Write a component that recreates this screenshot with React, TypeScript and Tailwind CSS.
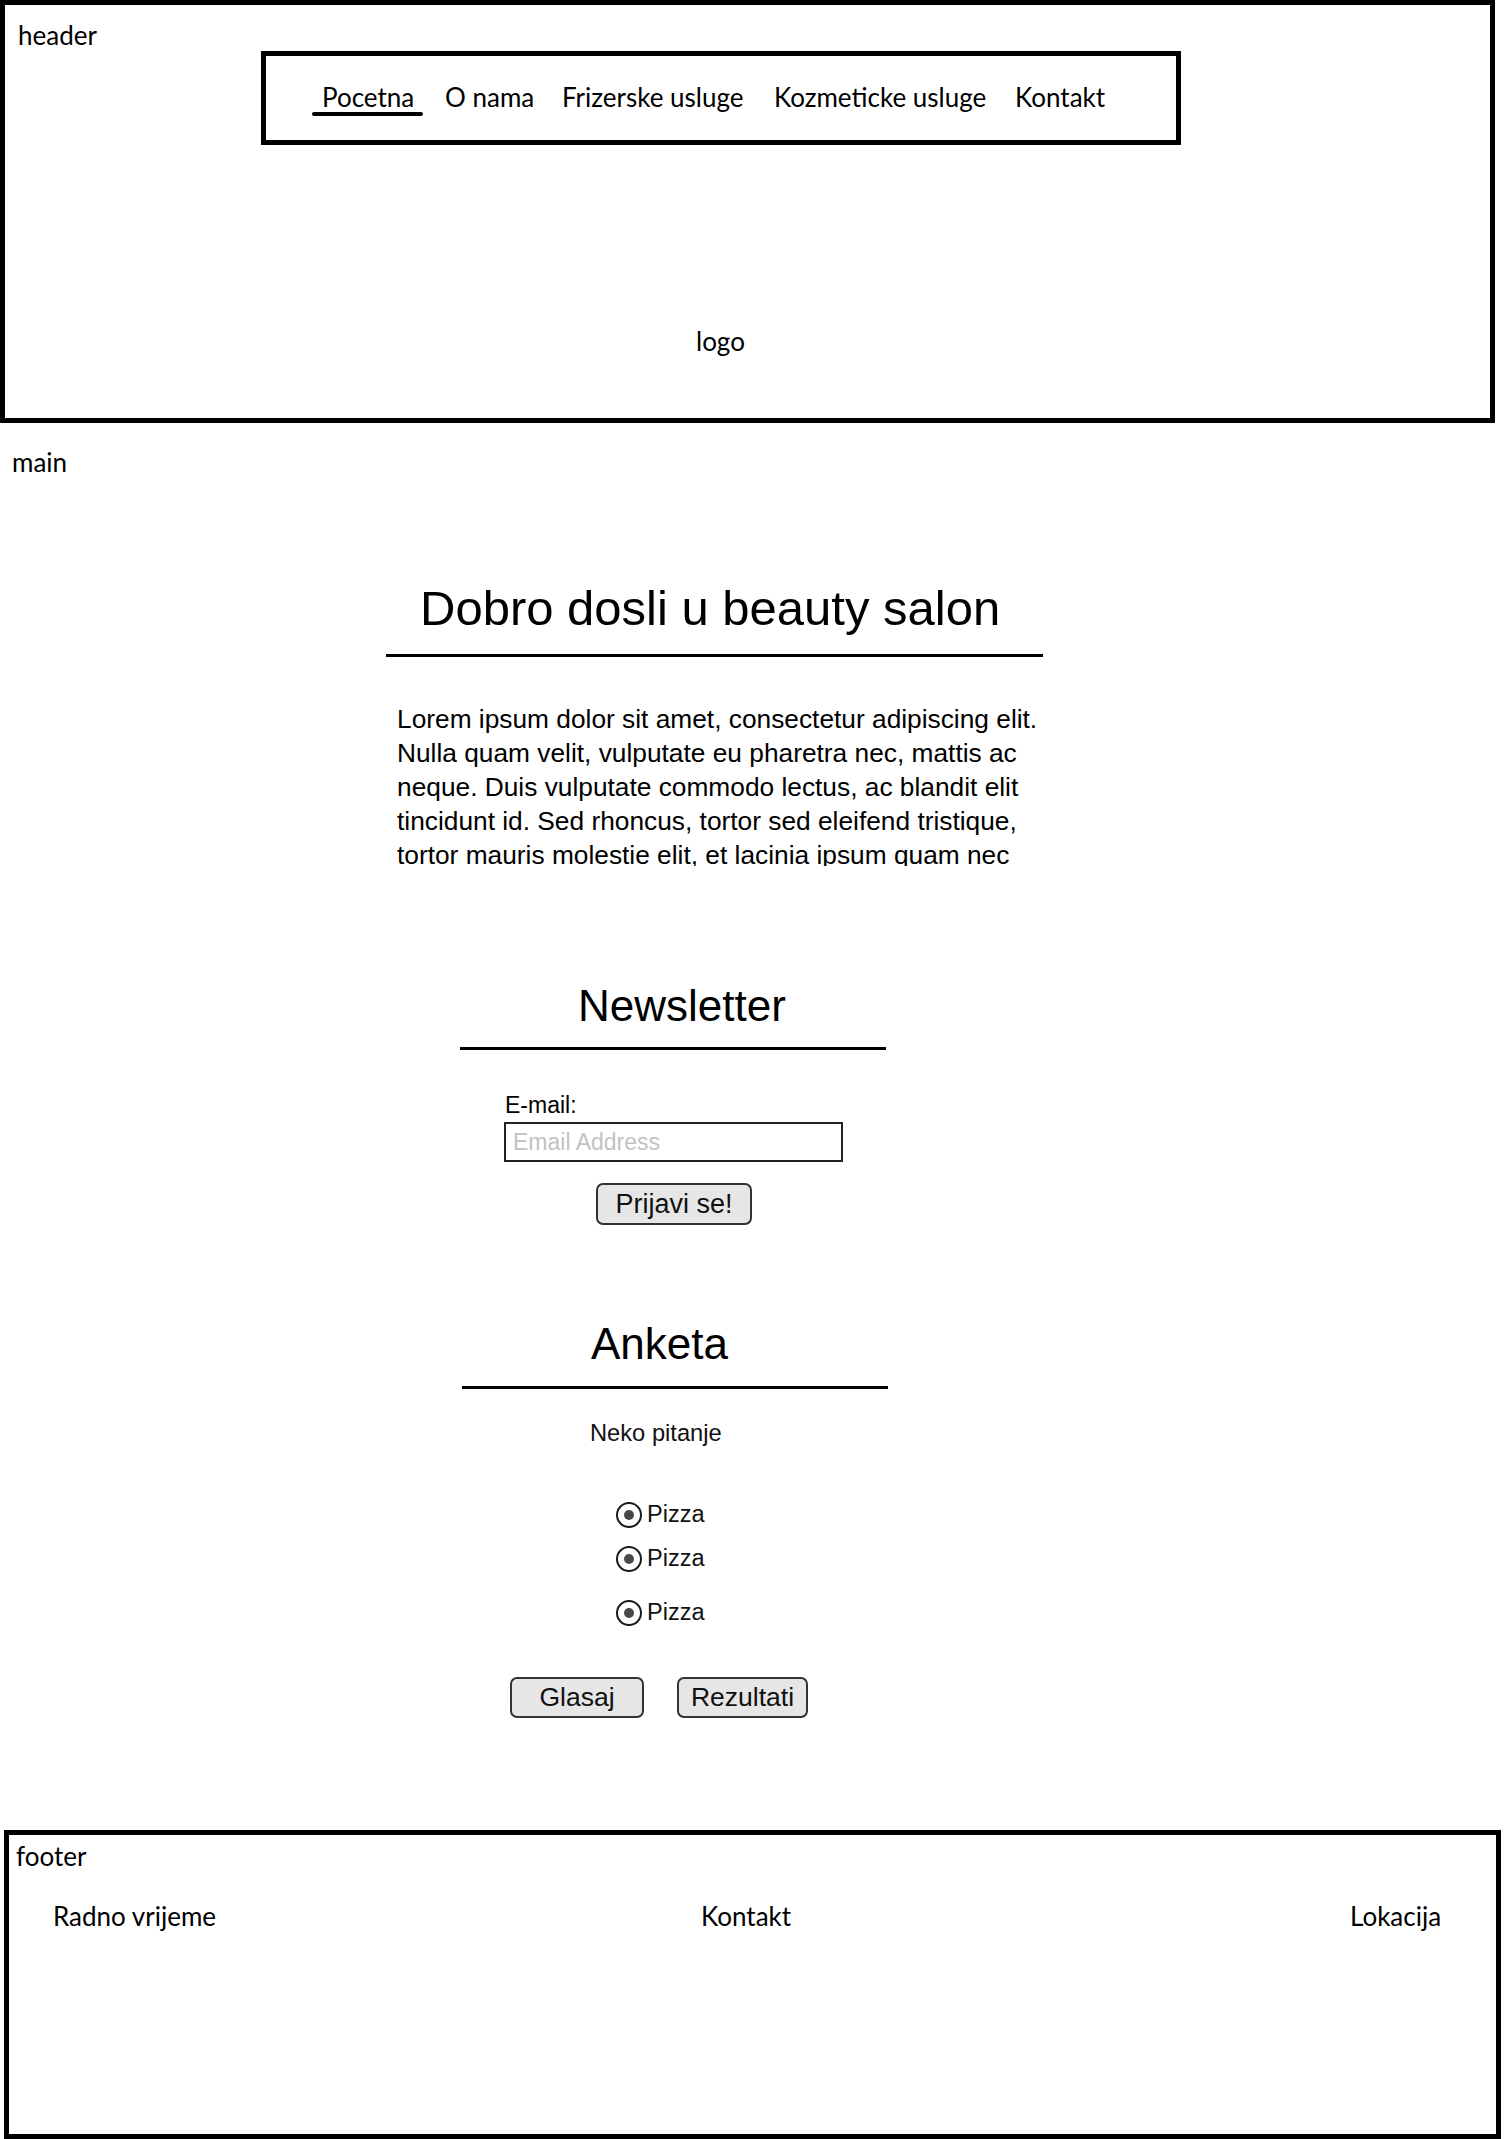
import React from "react";

const cal = "font-['Lato','Carlito',sans-serif]";
const ari = "font-['Liberation_Sans',Arial,sans-serif]";

function Radio({ label, className }: { label: string; className?: string }) {
  return (
    <div className={`flex items-center h-[26px] ml-[616px] ${className ?? ""}`}>
      <span className="w-[26px] h-[26px] rounded-full border-2 border-[#1a1a1a] flex items-center justify-center">
        <span className="w-[10px] h-[10px] rounded-full bg-[#484848]" />
      </span>
      <span className={`${ari} text-[23.5px] leading-none ml-[5px] text-[#111]`}>{label}</span>
    </div>
  );
}

export default function App() {
  return (
    <div className="w-[1512px] h-[2139px] bg-white text-black overflow-hidden">
      {/* HEADER */}
      <header className="w-[1495px] h-[423px] border-[5px] border-black flex flex-col">
        <div className={`${cal} text-[26px] leading-[28px] h-[28px] mt-[16px] ml-[13px]`}>header</div>
        <nav className="w-[920px] h-[94px] border-[5px] border-black ml-[256px] mt-[2px] flex items-start pt-[27px] pl-[56px]">
          <div className="w-[123px] flex flex-col">
            <span className={`${cal} text-[26px] leading-[28px] h-[28px]`}>Pocetna</span>
            <span className="block h-[4px] w-[111px] -ml-[10px] mt-[1px] rounded-full bg-black" />
          </div>
          <span className={`${cal} text-[26px] leading-[28px] w-[117px]`}>O nama</span>
          <span className={`${cal} text-[26px] leading-[28px] w-[212px]`}>Frizerske usluge</span>
          <span className={`${cal} text-[26px] leading-[28px] w-[241px]`}>Kozmeticke usluge</span>
          <span className={`${cal} text-[26px] leading-[28px]`}>Kontakt</span>
        </nav>
        <div className={`${cal} text-[26px] leading-[28px] h-[28px] mt-[182px] ml-[691px]`}>logo</div>
      </header>

      {/* MAIN */}
      <main className="flex flex-col">
        <div className={`${cal} text-[26px] leading-[28px] h-[28px] mt-[25px] ml-[12px]`}>main</div>

        <section className="ml-[386px] w-[657px] flex flex-col mt-[108px]">
          <h1 className={`${ari} text-[49px] leading-none h-[49px] pl-[34px] whitespace-nowrap`}>
            Dobro dosli u beauty salon
          </h1>
          <div className="h-[3px] bg-black mt-[21px]" />
          <p className={`${ari} text-[26.3px] leading-[34px] w-[655px] h-[164px] overflow-hidden ml-[11px] mt-[45px]`}>
            Lorem ipsum dolor sit amet, consectetur adipiscing elit. Nulla quam velit, vulputate eu pharetra nec,
            mattis ac neque. Duis vulputate commodo lectus, ac blandit elit tincidunt id. Sed rhoncus, tortor sed
            eleifend tristique, tortor mauris molestie elit, et lacinia ipsum quam nec dui. Quisque nec mauris sit
            amet elit iaculis pretium sit amet quis magna.
          </p>
        </section>

        {/* Newsletter */}
        <section className="flex flex-col mt-[118px]">
          <h2 className={`${ari} text-[44px] leading-none h-[44px] ml-[578px]`}>Newsletter</h2>
          <div className="h-[3px] w-[426px] bg-black ml-[460px] mt-[19px]" />
          <label className={`${ari} text-[23px] leading-none h-[23px] ml-[505px] mt-[44px]`}>E-mail:</label>
          <input
            type="text"
            placeholder="Email Address"
            className={`${ari} text-[23px] w-[339px] h-[40px] border-2 border-[#222] ml-[504px] mt-[5px] pl-[7px] outline-none placeholder:text-[#c2c2c2]`}
          />
          <button
            className={`${ari} text-[27px] leading-none w-[156px] h-[42px] ml-[596px] mt-[21px] bg-[#e6e6e6] border-2 border-[#333] rounded-[7px] text-[#111]`}
          >
            Prijavi se!
          </button>
        </section>

        {/* Anketa */}
        <section className="flex flex-col mt-[97px]">
          <h2 className={`${ari} text-[44px] leading-none h-[44px] ml-[591px]`}>Anketa</h2>
          <div className="h-[3px] w-[426px] bg-black ml-[462px] mt-[20px]" />
          <div className={`${ari} text-[23.7px] leading-none h-[24px] ml-[590px] mt-[33px] text-[#111]`}>Neko pitanje</div>
          <Radio label="Pizza" className="mt-[56px]" />
          <Radio label="Pizza" className="mt-[18px]" />
          <Radio label="Pizza" className="mt-[28px]" />
          <div className="flex mt-[51px] ml-[510px]">
            <button
              className={`${ari} text-[26.5px] leading-none w-[134px] h-[41px] bg-[#e6e6e6] border-2 border-[#333] rounded-[7px] text-[#111]`}
            >
              Glasaj
            </button>
            <button
              className={`${ari} text-[26.5px] leading-none w-[131px] h-[41px] ml-[33px] bg-[#e6e6e6] border-2 border-[#333] rounded-[7px] text-[#111]`}
            >
              Rezultati
            </button>
          </div>
        </section>
      </main>

      {/* FOOTER */}
      <footer className="w-[1497px] h-[309px] ml-[4px] mt-[112px] border-[5px] border-black flex flex-col pt-[7px] pl-[7px]">
        <div className={`${cal} text-[26px] leading-[28px] h-[28px]`}>footer</div>
        <div className={`${cal} text-[26px] leading-[28px] flex mt-[32px] pl-[37px]`}>
          <span className="w-[648px]">Radno vrijeme</span>
          <span className="w-[649px]">Kontakt</span>
          <span>Lokacija</span>
        </div>
      </footer>
    </div>
  );
}
